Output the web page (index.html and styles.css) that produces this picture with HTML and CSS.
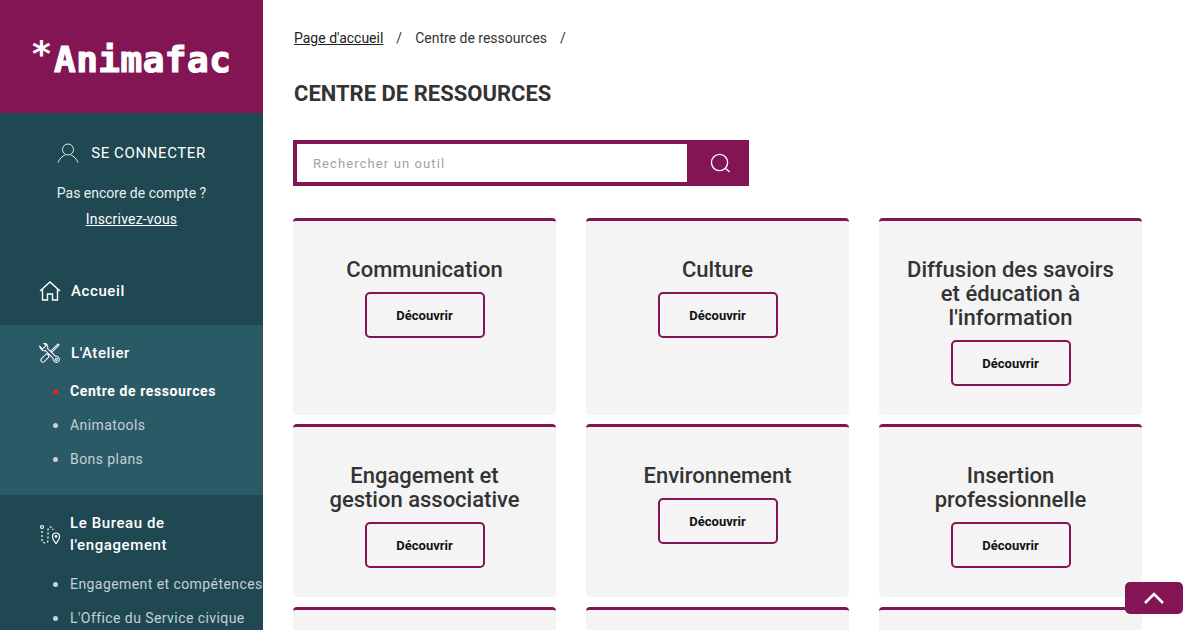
FILE: index.html
```html
<!doctype html>
<html lang="fr">
<head>
  <meta charset="utf-8" />
  <meta name="viewport" content="width=device-width, initial-scale=1" />
  <title>Centre de ressources - Animafac</title>
  <link rel="stylesheet" href="styles.css">
</head>
<body>
  <div class="page">
    <aside class="side">
      <a class="logo" href="#"><span class="star">*</span><span class="logo-word">Animafac</span></a>

      <div class="account">
        <a class="login" href="#">
          <svg width="22" height="20" viewBox="0 0 22 20" fill="none" stroke="#dfe8ea" stroke-width="1"><circle cx="11" cy="6.500" r="5.500"/><path d="M1 19.500c1.500-4 4.500-6.500 7-7.500M21 19.500c-1.500-4-4.500-6.500-7-7.500"/></svg>
          <span>SE CONNECTER</span>
        </a>
        <p class="nocount">Pas encore de compte ?</p>
        <a class="signup" href="#">Inscrivez-vous</a>
      </div>

      <nav>
        <div class="nav-group home">
          <a class="nav-top wide" href="#">
            <svg width="22" height="20" viewBox="0 0 22 20" fill="none" stroke="#fff" stroke-width="1.400"><path d="M1 10 11 1l10 9M3.500 8.500V19h5v-6h5v6h5V8.500"/></svg>
            <span>Accueil</span>
          </a>
        </div>
        <div class="nav-group current">
          <a class="nav-top wide" href="#">
            <svg width="22" height="20" viewBox="0 0 22 20" fill="none" stroke="#fff" stroke-width="1"><g transform="rotate(45 11 10)"><rect x="9" y="12.500" width="4" height="9.500" rx="2"/><rect x="10.200" y="-2" width="1.600" height="14.500"/></g><g transform="rotate(-45 11 10)"><path fill="#2b5a67" d="M9.500 5C7 4 6.500 0 8.500-2L8.500 2L13.500 2L13.500-2C15.500 0 15 4 12.500 5V16C14.500 17 14.500 22 11 22C7.500 22 7.500 17 9.500 16Z"/><circle cx="11" cy="19" r="1"/></g></svg>
            <span>L'Atelier</span>
          </a>
          <ul class="sub">
            <li class="active"><a href="#">Centre de ressources</a></li>
            <li><a href="#">Animatools</a></li>
            <li><a href="#">Bons plans</a></li>
          </ul>
        </div>
        <div class="nav-group bureau">
          <a class="nav-top two" href="#">
            <svg width="22" height="22" viewBox="0 0 22 22" fill="none" stroke="#fff" stroke-width="1.200"><circle cx="3" cy="4" r="1.500"/><path d="M3 8v9c0 2 1 3 3 3s3-1 3-3V7c0-2 1-3 2.500-3S14 5 14 7" stroke-dasharray="2 2"/><path d="M17 20.500c-2.500-3-3.500-5-3.500-7a3.500 3.500 0 0 1 7 0c0 2-1 4-3.500 7z"/><circle cx="17" cy="13.500" r=".8"/></svg>
            <span>Le Bureau de l'engagement</span>
          </a>
          <ul class="sub">
            <li><a href="#">Engagement et compétences</a></li>
            <li><a href="#">L'Office du Service civique</a></li>
          </ul>
        </div>
      </nav>
    </aside>

    <main class="content">
      <div class="crumbs">
        <a href="#">Page d'accueil</a><span class="sep">/</span><span>Centre de ressources</span><span class="sep">/</span>
      </div>
      <h1>CENTRE DE RESSOURCES</h1>

      <form class="search">
        <input type="text" placeholder="Rechercher un outil">
        <button type="button" aria-label="Rechercher">
          <svg width="22" height="22" viewBox="0 0 22 22" fill="none" stroke="#fff" stroke-width="1.400"><circle cx="10" cy="10" r="8.500"/><path d="m16 16 4.500 4"/></svg>
        </button>
      </form>

      <div class="cards">
        <section class="card"><h2>Communication</h2><a class="btn" href="#">Découvrir</a></section>
        <section class="card"><h2>Culture</h2><a class="btn" href="#">Découvrir</a></section>
        <section class="card"><h2>Diffusion des savoirs et éducation à l'information</h2><a class="btn" href="#">Découvrir</a></section>
        <section class="card"><h2>Engagement et gestion associative</h2><a class="btn" href="#">Découvrir</a></section>
        <section class="card"><h2>Environnement</h2><a class="btn" href="#">Découvrir</a></section>
        <section class="card"><h2>Insertion professionnelle</h2><a class="btn" href="#">Découvrir</a></section>
        <section class="card blank"></section>
        <section class="card blank"></section>
        <section class="card blank"></section>
      </div>
    </main>
  </div>

  <a class="to-top" href="#" aria-label="Haut de page">
    <svg width="20" height="12" viewBox="0 0 20 12" fill="none" stroke="#fff" stroke-width="2.600"><path d="m1 11 9-9 9 9"/></svg>
  </a>
</body>
</html>
```

FILE: styles.css
```css
:root{
  --plum:#841554;
  --teal:#204853;
  --teal-light:#2b5a67;
  --ink:#333333;
  --card:#f4f4f4;
}

*{box-sizing:border-box}
html,body{height:630px; overflow:hidden}
body{
  margin:0; background:#fff; color:var(--ink);
  font-family:Roboto, "Liberation Sans", sans-serif;
}
a{color:inherit}

.page{display:flex; align-items:flex-start}

/* sidebar */
.side{flex:0 0 263px; width:263px; height:630px; overflow:hidden; background:var(--teal); color:#fff}

.logo{
  display:flex; align-items:flex-start;
  height:113px; padding:36px 0 0 32px; background:var(--plum); color:#fff; text-decoration:none;
}
.star{font:700 36px/36px "DejaVu Sans", sans-serif; width:22px}
.logo-word{
  font:700 36px/36px "DejaVu Sans Mono", monospace; margin-top:6px; letter-spacing:.5px;
  -webkit-text-stroke:1.2px #fff;
}

.account{display:flex; flex-direction:column; align-items:center; padding-top:29px; height:150px}
.login{display:flex; align-items:center; gap:12px; text-decoration:none; font-size:15px; letter-spacing:.6px; height:22px}
.nocount{margin:20px 0 0; font-size:14px; line-height:18px; color:#e8eff0}
.signup{margin-top:8px; font-size:14px; line-height:18px; letter-spacing:.2px}

.nav-group{padding:0 0 0 39px}
.home{padding-top:17px; height:62px}
.current{background:var(--teal-light); padding-top:17px; height:170px}
.bureau{padding-top:17px}
.bureau .sub{margin-top:11px}

.nav-top{display:flex; align-items:center; gap:9px; font-size:15px; line-height:22px; font-weight:500; text-decoration:none; letter-spacing:.6px}
.nav-top.wide{gap:10px}
.nav-top svg{flex:none}
.nav-top.two span{width:120px}

.sub{list-style:none; margin:10px 0 0; padding:0 0 0 14px}
.sub li{position:relative; padding-left:17px; height:34px; font-size:14px; line-height:34px; white-space:nowrap; color:#c4d0d3; letter-spacing:.43px}
.sub li a{text-decoration:none}
.sub li::before{content:""; position:absolute; left:0; top:15px; width:5px; height:5px; border-radius:50%; background:#c9d3d5}
.sub .active{color:#fff; font-weight:700; letter-spacing:.6px}
.sub .active::before{background:#e2232e}

/* main */
.content{flex:1; padding:29px 58px 0 30px}

.crumbs{display:flex; padding-left:1px; font-size:14px; line-height:18px; color:#333}
.crumbs a{color:#222}
.sep{margin:0 13px}

h1{margin:33px 0 0; padding-left:1px; font-size:22px; line-height:28px; font-weight:700; color:var(--ink)}

.search{display:flex; width:456px; height:46px; margin-top:32px; border:4px solid var(--plum); background:var(--plum)}
.search input{flex:0 0 390px; width:390px; border:0; background:#fff; padding:0 16px; font:13px Roboto, sans-serif; letter-spacing:1.1px; outline:0}
.search input::placeholder{color:#a3a3a3}
.search button{flex:1; border:0; background:none; padding:0 0 0 8px; display:flex; align-items:center; justify-content:center}
.search svg{width:21px; height:21px}

.cards{display:grid; grid-template-columns:repeat(3, 263px); column-gap:30px; row-gap:9.4px; margin-top:32px}
.card{
  display:flex; flex-direction:column; align-items:center;
  background:var(--card); border-top:3px solid var(--plum); border-radius:4px;
  padding:37px 20px 29px; text-align:center;
}
.card.blank{height:100px}
.card h2{margin:0 0 10px; font-size:22px; line-height:24px; font-weight:500; color:var(--ink)}
.btn{
  display:flex; align-items:center; justify-content:center;
  width:120px; height:46px; border:2px solid var(--plum); border-radius:5px;
  font-size:13px; font-weight:700; color:#111; text-decoration:none;
}

.to-top{
  position:fixed; left:1125px; top:582px; width:58px; height:32px;
  display:flex; align-items:center; justify-content:center;
  background:var(--plum); border-radius:5px;
}
```
